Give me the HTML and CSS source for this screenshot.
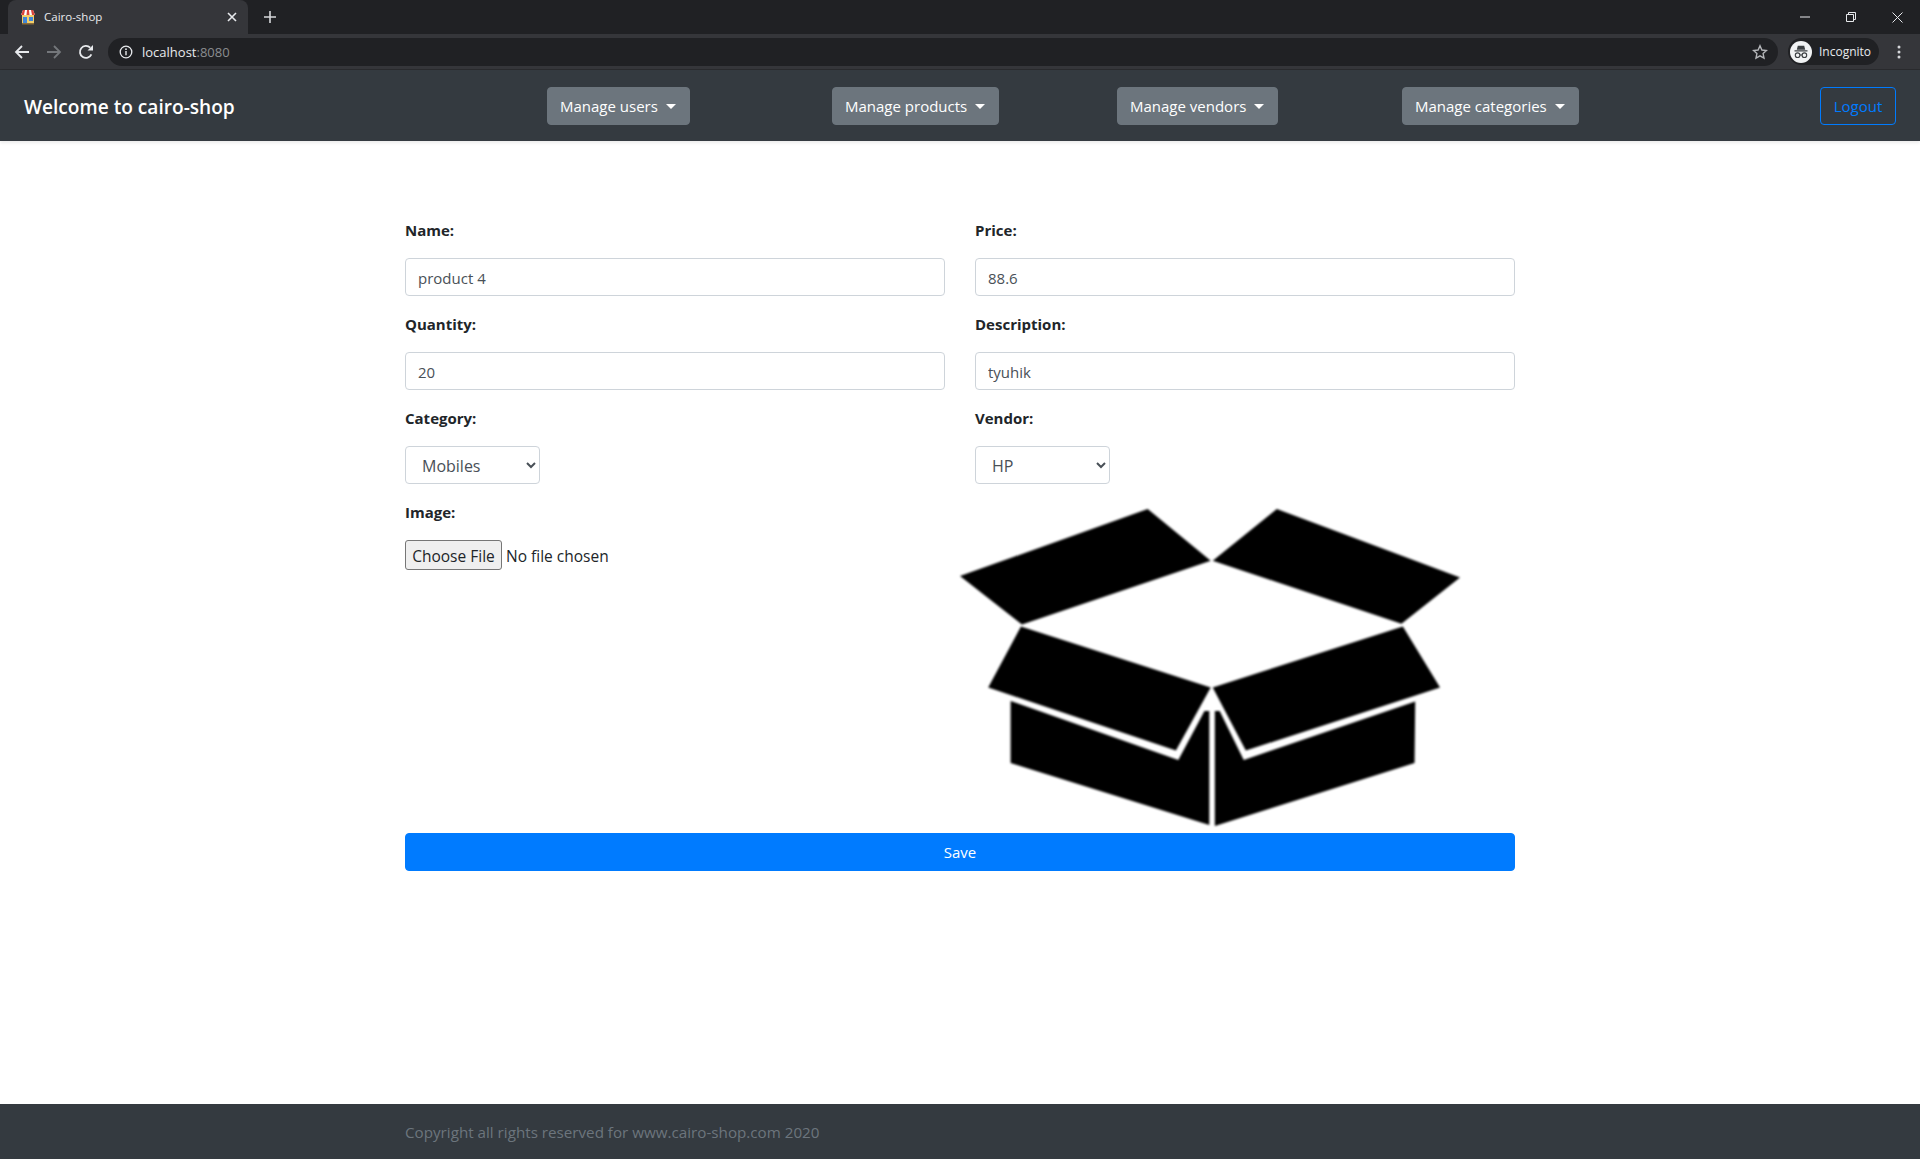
FILE: index.html
```html
<!DOCTYPE html>
<html>
  <head>
    <title>Cairo-shop</title>
    <link rel="stylesheet" href="styles.css">
  </head>
  <body>
    <div class="chrome">
      <div class="tabstrip">
        <div class="tab">
          <svg class="favicon" width="16" height="16" viewBox="0 0 16 16">
            <rect x="2" y="6" width="12" height="9" fill="#f3cf6b"/>
            <rect x="3" y="8" width="4" height="6" fill="#3f86d8"/>
            <rect x="9" y="8" width="4" height="4" fill="#3f86d8"/>
            <path d="M3 1h10l2 5H1z" fill="#fff"/>
            <path d="M3 1h2L4 6H1zM7 1h2l.5 5h-3zM11 1h2l2 5h-3z" fill="#d9443a"/>
            <rect x="2" y="14" width="12" height="1.5" fill="#8a6d3b"/>
          </svg>
          <span class="tab-title">Cairo-shop</span>
          <svg class="tab-close" width="10" height="10" viewBox="0 0 10 10">
            <path d="M1 1l8 8M9 1l-8 8" stroke="#e8eaed" stroke-width="1.6"/>
          </svg>
        </div>
        <svg class="new-tab" width="14" height="14" viewBox="0 0 14 14">
          <path d="M7 1v12M1 7h12" stroke="#d5d7da" stroke-width="1.6"/>
        </svg>
        <div class="window-controls">
          <svg width="10" height="10" viewBox="0 0 10 10"><path d="M0 5h10" stroke="#e8eaed"/></svg>
          <svg width="10" height="10" viewBox="0 0 10 10"><path d="M.5 2.5h7v7h-7zM2.5 2.5v-2h7v7h-2" fill="none" stroke="#e8eaed"/></svg>
          <svg width="11" height="11" viewBox="0 0 11 11"><path d="M.5.5l10 10M10.5.5l-10 10" stroke="#e8eaed"/></svg>
        </div>
      </div>
      <div class="toolbar">
        <svg class="tool-icon" width="16" height="16" viewBox="0 0 16 16">
          <path d="M15 8H2M8 2L2 8l6 6" fill="none" stroke="#e8eaed" stroke-width="1.8"/>
        </svg>
        <svg class="tool-icon" width="16" height="16" viewBox="0 0 16 16">
          <path d="M1 8h13M8 2l6 6-6 6" fill="none" stroke="#74777b" stroke-width="1.8"/>
        </svg>
        <svg class="tool-icon" width="16" height="16" viewBox="0 0 16 16">
          <path d="M13.4 10.4A6 6 0 1 1 12.2 3.7" fill="none" stroke="#e8eaed" stroke-width="1.8"/>
          <path d="M9.5 6.5H15V1z" fill="#e8eaed"/>
        </svg>
        <div class="omnibox">
          <svg width="14" height="14" viewBox="0 0 14 14">
            <circle cx="7" cy="7" r="5.8" fill="none" stroke="#e8eaed" stroke-width="1.3"/>
            <path d="M7 6v4.2" stroke="#e8eaed" stroke-width="1.4"/>
            <circle cx="7" cy="4.2" r=".9" fill="#e8eaed"/>
          </svg>
          <span class="url">localhost<span class="url-port">:8080</span></span>
          <svg class="star" width="16" height="16" viewBox="0 0 16 16">
            <path d="M8 1.8l1.9 4.2 4.6.5-3.4 3.1.9 4.6L8 11.9l-4 2.3.9-4.6-3.4-3.1 4.6-.5z" fill="none" stroke="#b4b6b9" stroke-width="1.4"/>
          </svg>
        </div>
        <div class="profile">
          <svg width="22" height="22" viewBox="0 0 22 22">
            <circle cx="11" cy="11" r="11" fill="#f1f3f4"/>
            <path d="M7.8 4.8h6.4l1 4H6.8zM4.5 9.3h13v1.2h-13z" fill="#3c4043"/>
            <circle cx="7.6" cy="14.2" r="2.3" fill="none" stroke="#3c4043" stroke-width="1.1"/>
            <circle cx="14.4" cy="14.2" r="2.3" fill="none" stroke="#3c4043" stroke-width="1.1"/>
            <path d="M9.9 14h2.2" stroke="#3c4043" stroke-width="1.1"/>
          </svg>
          <span class="profile-name">Incognito</span>
        </div>
        <svg class="kebab" width="4" height="14" viewBox="0 0 4 14">
          <circle cx="2" cy="2" r="1.5" fill="#d5d7da"/>
          <circle cx="2" cy="7" r="1.5" fill="#d5d7da"/>
          <circle cx="2" cy="12" r="1.5" fill="#d5d7da"/>
        </svg>
      </div>
    </div>

    <nav class="navbar">
      <a class="brand">Welcome to cairo-shop</a>
      <div class="nav-menus">
        <div><button class="btn-menu">Manage users</button></div>
        <div><button class="btn-menu">Manage products</button></div>
        <div><button class="btn-menu">Manage vendors</button></div>
        <div><button class="btn-menu">Manage categories</button></div>
      </div>
      <button class="btn-logout">Logout</button>
    </nav>

    <main class="content">
      <form class="product-form">
        <div class="form-row">
          <div class="field">
            <label>Name:</label>
            <input class="input" type="text" value="product 4">
          </div>
          <div class="field">
            <label>Price:</label>
            <input class="input" type="text" value="88.6">
          </div>
        </div>
        <div class="form-row">
          <div class="field">
            <label>Quantity:</label>
            <input class="input" type="text" value="20">
          </div>
          <div class="field">
            <label>Description:</label>
            <input class="input" type="text" value="tyuhik">
          </div>
        </div>
        <div class="form-row">
          <div class="field">
            <label>Category:</label>
            <select class="select"><option>Mobiles</option></select>
          </div>
          <div class="field">
            <label>Vendor:</label>
            <select class="select"><option>HP</option></select>
          </div>
        </div>
        <div class="form-row">
          <div class="field">
            <label>Image:</label>
            <input class="file" type="file">
          </div>
          <div class="preview">
            <svg class="box-image" width="500" height="317" viewBox="58 58 1452 945" preserveAspectRatio="none">
              <path d="M603 58L786 212 238 402 58 258z"/>
              <path d="M978 58L1510 262 1340 400 792 212z"/>
              <path d="M235 408L786 590 685 778 140 590z"/>
              <path d="M792 590L1344 408 1452 590 888 778z"/>
              <path d="M205 630L692 806 768 660 782 660 782 1000 205 815z"/>
              <path d="M798 660L812 660 882 806 1380 632 1378 815 798 1003z"/>
            </svg>
          </div>
        </div>
        <button class="btn-save" type="button">Save</button>
      </form>
    </main>

    <footer class="footer">
      <p>Copyright all rights reserved for www.cairo-shop.com 2020</p>
    </footer>
  </body>
</html>
```

FILE: styles.css
```css
* {
  box-sizing: border-box;
}
html,
body {
  height: 100%;
}
body {
  margin: 0;
  display: flex;
  flex-direction: column;
  height: 1159px;
  font-family: "Open Sans", "Noto Sans", sans-serif;
  font-size: 15px;
  color: #212529;
  background-color: #fff;
  overflow: hidden;
}

/* browser chrome */
.chrome {
  flex: none;
  background-color: #202124;
  color: #e8eaed;
}
.tabstrip {
  height: 34px;
  display: flex;
  align-items: center;
}
.tab {
  width: 240px;
  height: 34px;
  margin-left: 8px;
  padding: 0 11px 0 12px;
  display: flex;
  align-items: center;
  background-color: #35363a;
  border-radius: 8px 8px 0 0;
}
.favicon {
  flex: none;
}
.tab-title {
  flex: 1;
  margin-left: 8px;
  padding-bottom: 1px;
  font-size: 11.5px;
}
.new-tab {
  margin-left: 15px;
}
.window-controls {
  margin-left: auto;
  margin-right: 17px;
  display: flex;
  align-items: center;
  gap: 36px;
}
.toolbar {
  height: 36px;
  padding: 0 19px 0 14px;
  display: flex;
  align-items: center;
  background-color: #35363a;
  border-bottom: 1px solid #2a2b2e;
}
.tool-icon {
  margin-right: 16px;
}
.omnibox {
  flex: 1;
  height: 28px;
  margin-left: -2px;
  padding: 0 10px 0 11px;
  display: flex;
  align-items: center;
  background-color: #202124;
  border-radius: 14px;
}
.url {
  margin-left: 9px;
  font-size: 13px;
}
.url-port {
  color: #8b8d90;
}
.star {
  margin-left: auto;
}
.profile {
  width: 91px;
  height: 27px;
  margin-left: 10px;
  padding-left: 2px;
  display: flex;
  align-items: center;
  background-color: #202124;
  border-radius: 14px;
}
.profile-name {
  margin-left: 7px;
  font-size: 12px;
}
.kebab {
  margin-left: 18px;
}

/* navbar */
.navbar {
  flex: none;
  height: 71px;
  padding: 0 24px 0 24px;
  display: flex;
  align-items: center;
  background-color: #343a40;
  box-shadow: 0 2px 3px rgba(0, 0, 0, 0.08);
}
.brand {
  width: 523px;
  padding-top: 2px;
  font-size: 19.1px;
  font-weight: 600;
  color: #fff;
}
.nav-menus {
  flex: 1;
  display: grid;
  grid-template-columns: repeat(4, 285px);
}
.btn-menu {
  height: 38px;
  padding: 0 13px 0 12px;
  font: inherit;
  font-size: 15px;
  color: #fff;
  background-color: #6c757d;
  border: 1px solid #6c757d;
  border-radius: 4px;
}
.btn-menu::after {
  content: "";
  display: inline-block;
  margin-left: 8px;
  vertical-align: 3px;
  border-top: 5px solid #fff;
  border-left: 5px solid transparent;
  border-right: 5px solid transparent;
}
.btn-logout {
  width: 76px;
  height: 38px;
  font: inherit;
  font-size: 15px;
  color: #007bff;
  background-color: transparent;
  border: 1px solid #007bff;
  border-radius: 4px;
}

/* form */
.content {
  flex: 1;
  padding: 70px 15px 0;
}
.product-form {
  width: 1110px;
  margin: 0 auto;
}
.form-row {
  display: flex;
  gap: 30px;
}
.field {
  width: 540px;
}
.field label {
  display: block;
  height: 24px;
  margin-top: 7px;
  margin-bottom: 16px;
  line-height: 24px;
  font-size: 15px;
  font-weight: 700;
}
.input,
.select {
  display: block;
  height: 38px;
  margin-bottom: 9px;
  font: inherit;
  color: #495057;
  background-color: #fff;
  border: 1px solid #ced4da;
  border-radius: 4px;
}
.input {
  width: 100%;
  padding: 2px 12px 0;
}
.select {
  width: 135px;
  padding: 2px 8px 0 12px;
  font-size: 16px;
}
.file {
  display: block;
  width: 300px;
  height: 30px;
  font: inherit;
  font-size: 15.5px;
  line-height: 30px;
}
.file::file-selector-button {
  width: 97px;
  height: 30px;
  margin-right: 4px;
  padding: 0;
  font: inherit;
  color: #212529;
  background-color: #efefef;
  border: 1px solid #767676;
  border-radius: 3px;
}
.preview {
  height: 324px;
  margin-top: 16px;
  margin-left: -15px;
}
.box-image {
  display: block;
  filter: blur(0.8px);
}
.btn-save {
  display: block;
  width: 100%;
  height: 38px;
  font: inherit;
  color: #fff;
  background-color: #007bff;
  border: 1px solid #007bff;
  border-radius: 4px;
}

/* footer */
.footer {
  flex: none;
  height: 55px;
  padding: 0 405px;
  display: flex;
  align-items: center;
  background-color: #343a40;
}
.footer p {
  margin: 0;
  font-size: 15.2px;
  color: #6c757d;
}
```
